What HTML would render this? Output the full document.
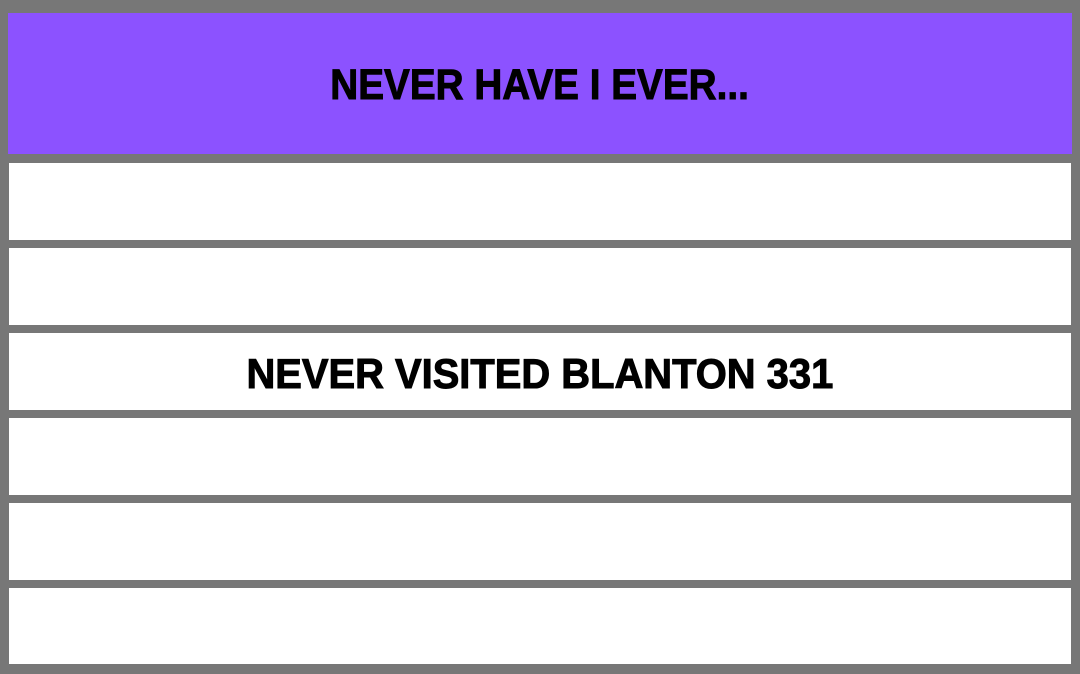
<!DOCTYPE html>
<html><head><style>
body{margin:0;width:1080px;height:674px;background:#777;position:relative;overflow:hidden;font-family:"Liberation Sans",sans-serif;font-weight:bold}
.r{position:absolute;left:9px;width:1062px;background:#fff;display:flex;align-items:center;justify-content:center;color:#000;font-size:40px;white-space:nowrap}
.r span{-webkit-text-stroke:1px #000;display:inline-block}
.h{left:8px;width:1064px;top:13px;height:141px;background:#8c52ff}
</style></head><body>
<div class="r h"><span style="font-size:43px;position:relative;top:2px;transform:scaleX(0.90)">NEVER HAVE I EVER...</span></div>
<div class="r" style="top:163px;height:77px"></div>
<div class="r" style="top:248px;height:77px"></div>
<div class="r" style="top:333px;height:77px"><span style="font-size:42px;position:relative;top:2px;transform:scaleX(0.95)">NEVER VISITED BLANTON 331</span></div>
<div class="r" style="top:418px;height:77px"></div>
<div class="r" style="top:503px;height:77px"></div>
<div class="r" style="top:588px;height:76px"></div>
</body></html>
